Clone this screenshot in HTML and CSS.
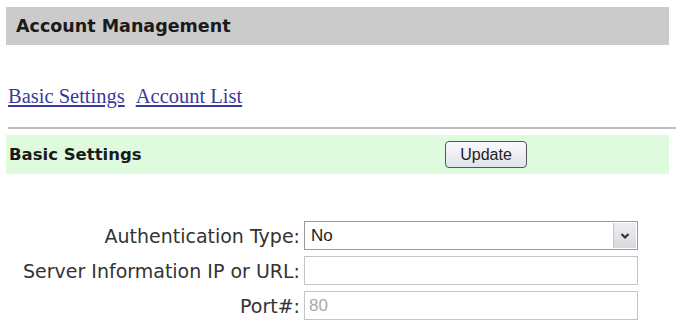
FILE: index.html
```html
<!DOCTYPE html>
<html lang="en">
<head>
    <meta charset="UTF-8">
    <title>Account Management</title>
    <link rel="stylesheet" href="styles.css">
</head>
<body>
    <div class="page-title">Account Management</div>

    <div class="tabs">
        <a href="#">Basic Settings</a>
        <a href="#">Account List</a>
    </div>
    <hr class="divider">

    <div class="section-bar">
        <span class="section-title">Basic Settings</span>
        <button class="update">Update</button>
    </div>

    <div class="form">
        <label for="authType">Authentication Type:</label>
        <div class="select-wrap">
            <select id="authType">
                <option>No</option>
            </select>
            <span class="select-arrow">
                <svg width="10" height="8" viewBox="0 0 10 8">
                    <path d="M1.5 2 L5 5.5 L8.5 2" fill="none" stroke="#333" stroke-width="2.2"/>
                </svg>
            </span>
        </div>

        <label for="server">Server Information IP or URL:</label>
        <input type="text" id="server">

        <label for="port">Port#:</label>
        <input type="text" id="port" value="80" disabled>
    </div>
</body>
</html>
```

FILE: styles.css
```css
body {
    margin: 7px 0 0 0;
    background: white;
    font-family: "DejaVu Sans", Verdana, sans-serif;
}
.page-title {
    margin: 0 7px 0 6px;
    height: 38px;
    line-height: 38px;
    padding-left: 10px;
    background-color: #cbcbcb;
    font-weight: bold;
    font-size: 17.5px;
    color: #1a1a1a;
}
.tabs {
    margin: 39px 0 0 8px;
    font-family: "Liberation Serif", "Times New Roman", serif;
    font-size: 20.5px;
    line-height: 24px;
}
.tabs a {
    color: #3a3a9c;
    margin-right: 7px;
}
.divider {
    margin: 19px 0 0 8px;
    border: none;
    height: 2px;
    background: #bdbdbd;
}
.section-bar {
    display: flex;
    align-items: center;
    margin: 6px 7px 0 6px;
    height: 39px;
    padding-left: 3px;
    background-color: #defbde;
}
.section-title {
    width: 436px;
    font-weight: bold;
    font-size: 16.5px;
    color: #1a1a1a;
}
button.update {
    width: 82px;
    height: 27px;
    border: 1px solid #555;
    border-radius: 4px;
    background: linear-gradient(#fafafe, #e2e2ea);
    font-family: "Liberation Sans", Arial, sans-serif;
    font-size: 16px;
    color: #222;
    padding: 0;
}
.form {
    display: grid;
    grid-template-columns: 292px 334px;
    column-gap: 4px;
    row-gap: 6px;
    margin: 47px 0 0 8px;
    align-items: center;
}
.form label {
    text-align: right;
    font-size: 19px;
    color: #333;
}
.select-wrap {
    position: relative;
    height: 29px;
}
select {
    width: 100%;
    height: 29px;
    -webkit-appearance: none;
    appearance: none;
    border: 1px solid #9a9a9a;
    background: white;
    padding: 0 6px;
    font-family: "Liberation Sans", Arial, sans-serif;
    font-size: 17px;
    color: #222;
}
.select-arrow {
    position: absolute;
    top: 2px;
    right: 2px;
    width: 22px;
    height: 25px;
    display: flex;
    align-items: center;
    justify-content: center;
    background: linear-gradient(#eeeef2, #d8d8de);
    border-left: 1px solid #c8c8cc;
}
input {
    height: 29px;
    box-sizing: border-box;
    border: 1px solid #c4c4c4;
    padding: 0 4px;
    font-family: "Liberation Sans", Arial, sans-serif;
    font-size: 17px;
}
input:disabled {
    background: white;
    color: #a8a8a8;
}
```
